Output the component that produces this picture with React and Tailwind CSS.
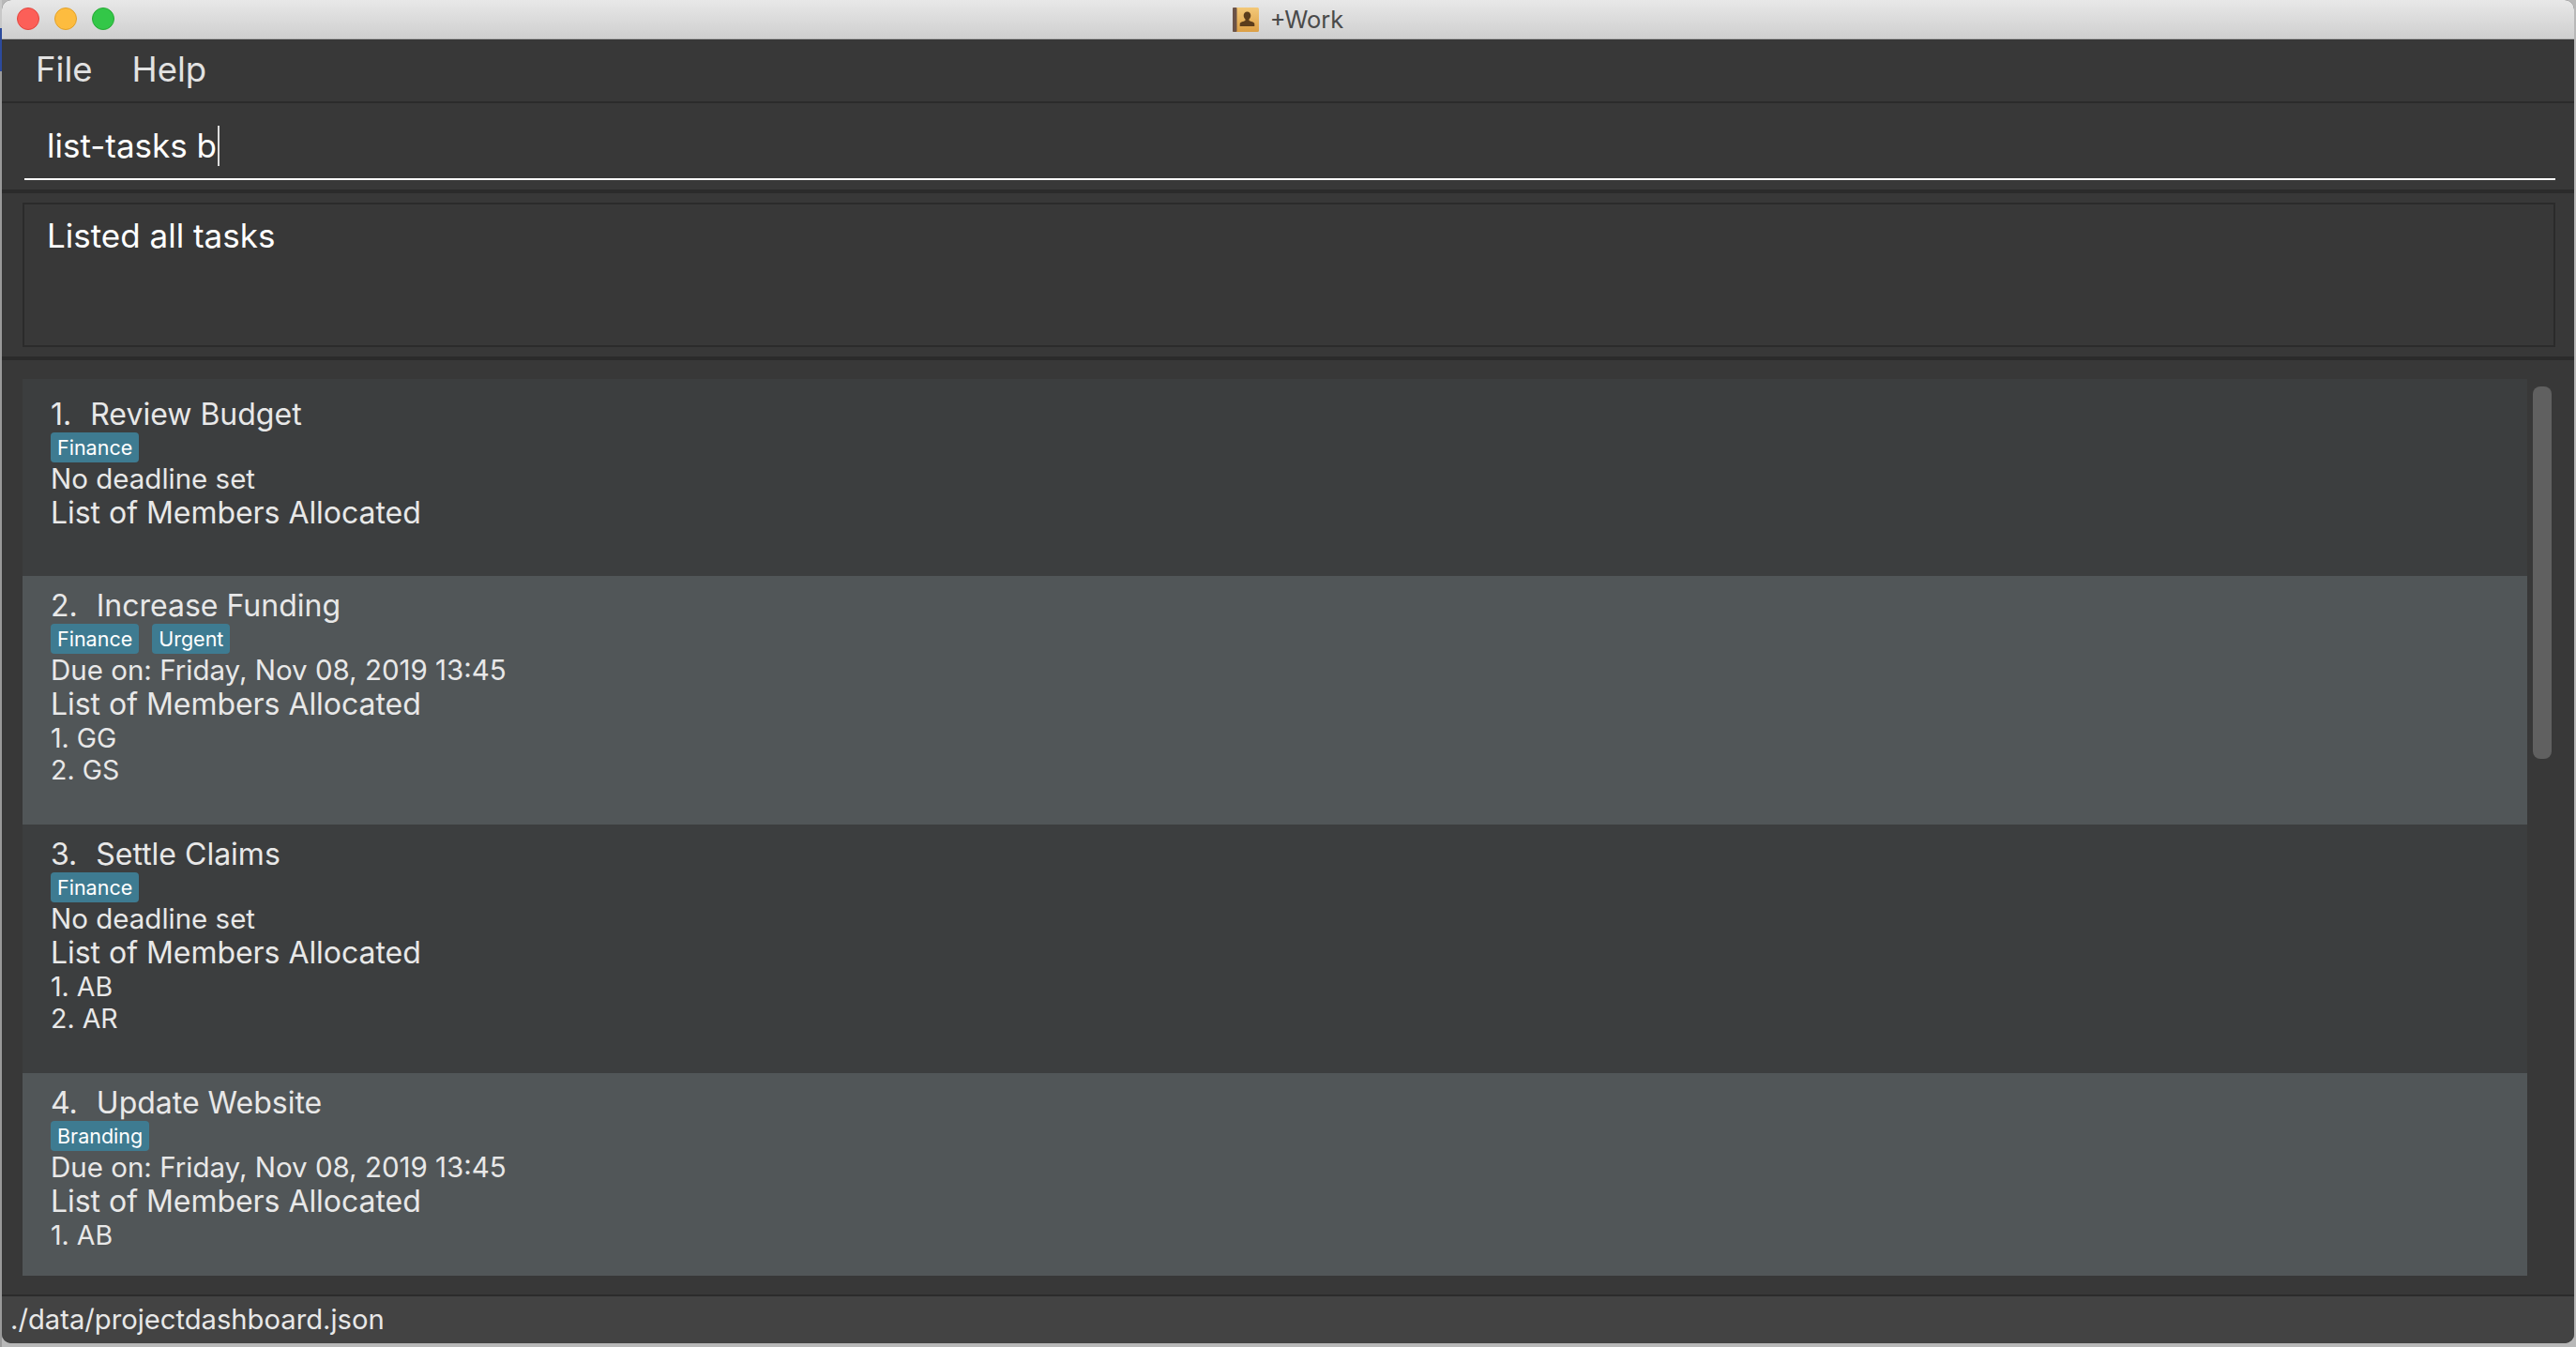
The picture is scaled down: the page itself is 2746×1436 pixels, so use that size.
import React from 'react'

const tasks = [
  { id: 1, name: 'Review Budget', tags: ['Finance'], due: 'No deadline set', members: [], height: 'h-[210px] pt-[19px] bg-[#3c3e3f]' },
  { id: 2, name: 'Increase Funding', tags: ['Finance', 'Urgent'], due: 'Due on: Friday, Nov 08, 2019 13:45', members: ['GG', 'GS'], height: 'h-[265px] pt-[13px] bg-[#515658]' },
  { id: 3, name: 'Settle Claims', tags: ['Finance'], due: 'No deadline set', members: ['AB', 'AR'], height: 'h-[265px] pt-[13px] bg-[#3c3e3f]' },
  { id: 4, name: 'Update Website', tags: ['Branding'], due: 'Due on: Friday, Nov 08, 2019 13:45', members: ['AB'], height: 'h-[216px] pt-[13px] bg-[#515658]' },
]

function BookIcon() {
  return (
    <svg width="28" height="26" viewBox="0 0 28 26">
      <defs>
        <linearGradient id="cover" x1="0" y1="0" x2="0" y2="1">
          <stop offset="0" stopColor="#f3c878" />
          <stop offset="1" stopColor="#dc9f45" />
        </linearGradient>
      </defs>
      <rect x="0" y="0" width="28" height="26" rx="1.5" fill="url(#cover)" />
      <rect x="0" y="0" width="4.5" height="26" rx="1" fill="#6b5348" />
      <path d="M15.500 4.500c-2.400 0-3.800 1.700-3.800 4 0 1.700.8 3.100 1.800 4v1.600c-1.700 1-5.800 1.100-5.800 3.700V20h15.600v-2.200c0-2.600-4.100-2.700-5.800-3.700v-1.600c1-.9 1.800-2.300 1.800-4 0-2.300-1.400-4-3.800-4z" fill="#5b3d1c" />
    </svg>
  )
}

function TaskCard({ task }) {
  return (
    <div className={`overflow-hidden pl-[30px] text-[#e8e8e8] ${task.height}`}>
      <div className="flex h-[38px] gap-[2px] text-[32px] leading-[37px] whitespace-pre">
        <span>{task.id}.  </span>
        <span>{task.name}</span>
      </div>
      <div className="flex h-[32px] gap-[14px]">
        {task.tags.map((tag) => (
          <span key={tag} className="rounded-[4px] bg-[#3e7b91] px-[7px] text-[21.5px] leading-[32px] text-white">{tag}</span>
        ))}
      </div>
      <div className="h-[36px] text-[29.5px] leading-[34px]">{task.due}</div>
      <div className="h-[36px] text-[32px] leading-[36px] tracking-[-0.04px]">List of Members Allocated</div>
      {task.members.map((member, i) => (
        <div key={member} className="h-[34px] text-[28.5px] leading-[35px]">{i + 1}. {member}</div>
      ))}
    </div>
  )
}

export default function App() {
  return (
    <div className="flex h-[1436px] w-[2746px] overflow-hidden bg-[#b8b8b8] font-['Inter',sans-serif]">
      <div className="flex w-[2px] flex-col">
        <div className="h-[30px] bg-[#c8c8c8]" />
        <div className="h-[46px] bg-[#2c4a9c]" />
        <div className="flex-1 bg-[#9a9a9a]" />
      </div>
      <div className="flex h-[1432px] w-[2742px] flex-col overflow-hidden rounded-t-[10px] rounded-b-[10px] bg-[#383838]">
        <div className="relative flex h-[42px] items-center justify-center border-b border-[#b0b0b0] bg-gradient-to-b from-[#e8e8e8] to-[#cfcfcf]">
          <div className="absolute left-[16px] top-[8px] flex gap-[16px]">
            <span className="h-[24px] w-[24px] rounded-full border border-[#e2463f] bg-[#fc5f58]" />
            <span className="h-[24px] w-[24px] rounded-full border border-[#e1a12a] bg-[#fdbc3f]" />
            <span className="h-[24px] w-[24px] rounded-full border border-[#27aa35] bg-[#33c748]" />
          </div>
          <div className="flex items-center gap-[12px]">
            <BookIcon />
            <span className="text-[25.500px] leading-[42px] text-[#4a4a4a]">+Work</span>
          </div>
        </div>

        <div className="flex h-[68px] items-center gap-[42px] border-b-2 border-[#2b2b2b] pl-[36px] pb-[2px] text-[36.500px] text-[#e2e2e2]">
          <span>File</span>
          <span>Help</span>
        </div>

        <div className="h-[96px] border-b-4 border-[#2b2b2b] pl-[24px] pr-[20px] pt-[22px]">
          <div className="flex h-[60px] items-start border-b-2 border-white pl-[24px]">
            <span className="text-[35px] leading-[46px] whitespace-pre text-white">list-tasks b</span>
            <span className="ml-[1px] mt-[2px] h-[43px] w-[2px] bg-[#dddddd]" />
          </div>
        </div>

        <div className="h-[178px] border-b-4 border-[#2b2b2b] pl-[22px] pr-[20px] pt-[10px]">
          <div className="h-[154px] border-2 border-[#2b2b2b] pl-[24px] pt-[14px] text-[35px] leading-[39px] text-white">
            Listed all tasks
          </div>
        </div>

        <div className="flex h-[998px] overflow-hidden border-b-2 border-[#2b2b2b] pl-[22px] pt-[20px]">
          <div className="w-[2670px]">
            {tasks.map((task) => (
              <TaskCard key={task.id} task={task} />
            ))}
          </div>
          <div className="ml-[6px] mt-[8px] h-[397px] w-[20px] rounded-[8px] bg-[#606060]" />
        </div>

        <div className="flex h-[50px] items-center bg-[#434343] pl-[9px] text-[29.200px] text-[#e8e8e8]">
          ./data/projectdashboard.json
        </div>
      </div>
    </div>
  )
}
